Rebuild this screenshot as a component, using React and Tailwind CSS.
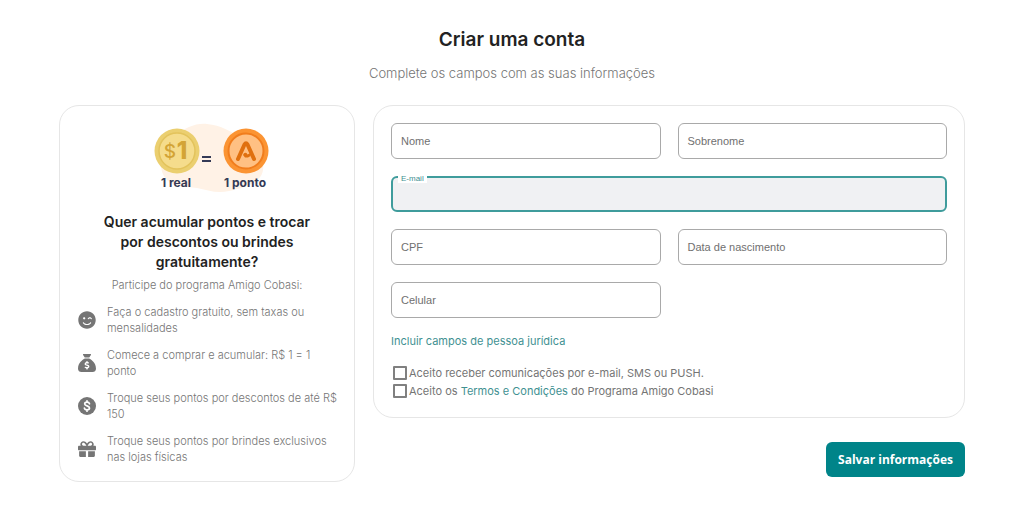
import { useState } from "react";
import { FaSmileWink, FaGift } from "react-icons/fa";
import { FaSackDollar } from "react-icons/fa6";

const DollarCircle = ({ className }) => (
  <svg viewBox="0 0 18 18" className={className} aria-hidden="true">
    <circle cx="9" cy="9" r="9" fill="currentColor" />
    <path
      d="M11.500 6.800C11.200 5.700 10.300 5.200 9 5.200C7.600 5.200 6.700 5.900 6.700 6.900C6.700 9.300 11.500 8.400 11.500 11C11.500 12.100 10.500 12.800 9 12.800C7.600 12.800 6.600 12.200 6.400 11.100M9 3.800V5.200M9 12.800V14.200"
      fill="none"
      stroke="#fff"
      strokeWidth="1.700"
      strokeLinecap="round"
    />
  </svg>
);

const benefits = [
  { icon: FaSmileWink, lines: ["Faça o cadastro gratuito, sem taxas ou", "mensalidades"] },
  { icon: FaSackDollar, lines: ["Comece a comprar e acumular: R$ 1 = 1", "ponto"] },
  { icon: DollarCircle, lines: ["Troque seus pontos por descontos de até R$", "150"] },
  { icon: FaGift, lines: ["Troque seus pontos por brindes exclusivos", "nas lojas físicas"] },
];

// 1 real = 1 ponto
const PointsBanner = () => (
  <svg width="140" height="76" viewBox="0 0 140 76" className="mx-auto" aria-hidden="true">
    <path
      d="M30 62C20 52 22 30 38 18C48 10 58 5 70 6C84 7 94 14 106 20C120 27 128 38 126 52C124 66 106 70 92 73C80 76 70 72 60 70C48 68 38 70 30 62Z"
      fill="#fff2e6"
    />
    <circle cx="40" cy="33" r="22.5" fill="#ebcf70" />
    <circle cx="40" cy="33" r="18" fill="#f5dc8c" stroke="#e3c35c" strokeWidth="1.5" />
    <g fill="#d3a436" fontFamily="Inter, sans-serif" textAnchor="middle">
      <text x="33" y="40" fontSize="19" fontWeight="500">$</text>
      <text x="45" y="41" fontSize="24" fontWeight="800">1</text>
    </g>
    <path d="M65 39h9M65 43h9" stroke="#343a56" strokeWidth="2" />
    <circle cx="109" cy="33" r="22.5" fill="#fb9433" />
    <circle cx="109" cy="33" r="17.5" fill="#ffc083" stroke="#f17d1d" strokeWidth="2" />
    <path
      d="M101 41L107.5 26.5Q109 24 110.5 26.5L117 41"
      fill="none"
      stroke="#e0700f"
      strokeWidth="4"
      strokeLinecap="round"
      strokeLinejoin="round"
    />
    <path d="M106 37q1-3 3.500-2l1 1.500 3-1.500v3l-2.500 1.500h-3z" fill="#e0700f" />
    <g fill="#343a56" fontFamily="Inter, sans-serif" fontSize="12" fontWeight="700" textAnchor="middle">
      <text x="39" y="69">1 real</text>
      <text x="108" y="69">1 ponto</text>
    </g>
  </svg>
);

const Field = ({ id, label, type = "text", value, onChange }) => (
  <div className="relative">
    <input
      id={id}
      name={id}
      type={type}
      value={value}
      onChange={onChange}
      className="block h-9 w-full rounded-md border border-[#a9a9a9] bg-white px-[10px] text-[11px] text-gray-800 outline-none"
    />
    {!value && (
      <label
        htmlFor={id}
        className="pointer-events-none absolute inset-y-0 left-[10px] flex items-center text-[11px] text-[#707070]"
      >
        {label}
      </label>
    )}
  </div>
);

const CheckRow = ({ id, checked, onChange, children }) => (
  <div className="flex h-[18px] items-center gap-[2px]">
    <input
      id={id}
      type="checkbox"
      checked={checked}
      onChange={onChange}
      className="ml-[2px] size-[14px] shrink-0 appearance-none rounded-[1px] border-2 border-[#808080] bg-white checked:bg-[#008489]"
    />
    <label htmlFor={id}>{children}</label>
  </div>
);

const App = () => {
  const [form, setForm] = useState({
    nome: "",
    sobrenome: "",
    email: "",
    cpf: "",
    nascimento: "",
    celular: "",
    comunicacoes: false,
    termos: false,
  });

  const handleChange = (key) => (e) => {
    const value = e.target.type === "checkbox" ? e.target.checked : e.target.value;
    setForm({ ...form, [key]: value });
  };

  const handleSubmit = (e) => {
    e.preventDefault();
  };

  return (
    <div className="min-h-screen bg-white px-[59px] pt-7 pb-7 font-['Inter',sans-serif] text-[#757575]">
      {/* Header */}
      <header className="text-center">
        <h1 className="text-[19px] leading-6 font-semibold text-[#222222]">Criar uma conta</h1>
        <p className="mt-[11px] text-[13px] leading-5 font-light">
          Complete os campos com as suas informações
        </p>
      </header>

      <main className="mt-[22px] grid grid-cols-[296px_1fr] items-start gap-[18px]">
        {/* Amigo Cobasi program */}
        <aside className="rounded-[20px] border border-[#e6e6e6] px-[17px] pt-3 pb-4">
          <PointsBanner />
          <h2 className="mt-[18px] text-center text-[14px] leading-[20px] font-semibold text-[#222222]">
            Quer acumular pontos e trocar
            <br />
            por descontos ou brindes
            <br />
            gratuitamente?
          </h2>
          <p className="mt-[5px] text-center text-[11px] leading-4 font-light">
            Participe do programa Amigo Cobasi:
          </p>
          <ul className="mt-[11px] flex flex-col gap-[11px]">
            {benefits.map(({ icon: Icon, lines }) => (
              <li key={lines[0]} className="flex items-center gap-[11px]">
                <span className="flex w-[19px] shrink-0 justify-center">
                  <Icon className="size-[18px] shrink-0" />
                </span>
                <span className="text-[11px] leading-4 font-light whitespace-nowrap">
                  {lines[0]}
                  <br />
                  {lines[1]}
                </span>
              </li>
            ))}
          </ul>
        </aside>

        {/* Account form */}
        <form onSubmit={handleSubmit}>
          <div className="rounded-[20px] border border-[#e6e6e6] p-[17px]">
            <div className="grid grid-cols-2 gap-[17px] font-['Liberation_Sans',Arial,sans-serif]">
              <Field id="nome" label="Nome" value={form.nome} onChange={handleChange("nome")} />
              <Field
                id="sobrenome"
                label="Sobrenome"
                value={form.sobrenome}
                onChange={handleChange("sobrenome")}
              />
              <div className="relative col-span-2">
                <input
                  id="email"
                  name="email"
                  type="email"
                  value={form.email}
                  onChange={handleChange("email")}
                  className="block h-9 w-full rounded-md border-2 border-[#3f9c9c] bg-[#f0f1f3] px-[10px] text-[11px] text-gray-800 outline-none"
                />
                <label
                  htmlFor="email"
                  className="absolute -top-[2px] left-[7px] bg-white px-[3px] text-[8px] leading-[9px] text-[#3f8f90]"
                >
                  E-mail
                </label>
              </div>
              <Field id="cpf" label="CPF" value={form.cpf} onChange={handleChange("cpf")} />
              <Field
                id="nascimento"
                label="Data de nascimento"
                value={form.nascimento}
                onChange={handleChange("nascimento")}
              />
              <Field
                id="celular"
                label="Celular"
                type="tel"
                value={form.celular}
                onChange={handleChange("celular")}
              />
            </div>

            <a href="#" className="mt-[15px] block w-fit text-[11px] leading-4 text-[#3f9192]">
              Incluir campos de pessoa jurídica
            </a>

            <div className="mt-[15px] text-[11px] leading-4">
              <CheckRow
                id="comunicacoes"
                checked={form.comunicacoes}
                onChange={handleChange("comunicacoes")}
              >
                Aceito receber comunicações por e-mail, SMS ou PUSH.
              </CheckRow>
              <CheckRow id="termos" checked={form.termos} onChange={handleChange("termos")}>
                Aceito os{" "}
                <a href="#" className="text-[#3f9192]">
                  Termos e Condições
                </a>{" "}
                do Programa Amigo Cobasi
              </CheckRow>
            </div>
          </div>

          <button
            type="submit"
            className="mt-6 ml-auto block h-[35px] cursor-pointer rounded-md bg-[#008489] px-3 font-['Open_Sans',sans-serif] text-[12px] font-bold text-white hover:bg-[#006f73]"
          >
            Salvar informações
          </button>
        </form>
      </main>
    </div>
  );
};

export default App;
